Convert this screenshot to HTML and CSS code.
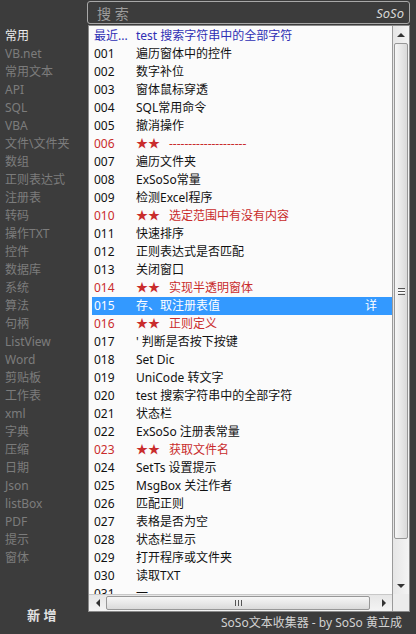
FILE: index.html
```html
<!DOCTYPE html>
<html lang="zh-CN">
<head>
    <meta charset="UTF-8">
    <title>SoSo文本收集器</title>
    <link rel="stylesheet" href="styles.css">
</head>
<body>
    <div class="app">
        <div class="side">
            <ul class="cats">
                <li class="on">常用</li>
                <li>VB.net</li>
                <li>常用文本</li>
                <li>API</li>
                <li>SQL</li>
                <li>VBA</li>
                <li>文件\文件夹</li>
                <li>数组</li>
                <li>正则表达式</li>
                <li>注册表</li>
                <li>转码</li>
                <li>操作TXT</li>
                <li>控件</li>
                <li>数据库</li>
                <li>系统</li>
                <li>算法</li>
                <li>句柄</li>
                <li>ListView</li>
                <li>Word</li>
                <li>剪贴板</li>
                <li>工作表</li>
                <li>xml</li>
                <li>字典</li>
                <li>压缩</li>
                <li>日期</li>
                <li>Json</li>
                <li>listBox</li>
                <li>PDF</li>
                <li>提示</li>
                <li>窗体</li>
            </ul>
            <div class="add">新 增</div>
        </div>

        <div class="main">
            <div class="search">
                <span class="search-label">搜 索</span>
                <span class="brand">SoSo</span>
            </div>

            <div class="list">
                <div class="rows">
                    <div class="row recent"><span class="no">最近...</span><span>test 搜索字符串中的全部字符</span></div>
                    <div class="row"><span class="no">001</span><span>遍历窗体中的控件</span></div>
                    <div class="row"><span class="no">002</span><span>数字补位</span></div>
                    <div class="row"><span class="no">003</span><span>窗体鼠标穿透</span></div>
                    <div class="row"><span class="no">004</span><span>SQL常用命令</span></div>
                    <div class="row"><span class="no">005</span><span>撤消操作</span></div>
                    <div class="row red"><span class="no">006</span><span class="star">★★</span><span>--------------------</span></div>
                    <div class="row"><span class="no">007</span><span>遍历文件夹</span></div>
                    <div class="row"><span class="no">008</span><span>ExSoSo常量</span></div>
                    <div class="row"><span class="no">009</span><span>检测Excel程序</span></div>
                    <div class="row red"><span class="no">010</span><span class="star">★★</span><span>选定范围中有没有内容</span></div>
                    <div class="row"><span class="no">011</span><span>快速排序</span></div>
                    <div class="row"><span class="no">012</span><span>正则表达式是否匹配</span></div>
                    <div class="row"><span class="no">013</span><span>关闭窗口</span></div>
                    <div class="row red"><span class="no">014</span><span class="star">★★</span><span>实现半透明窗体</span></div>
                    <div class="row selected"><span class="no">015</span><span>存、取注册表值</span><span class="detail">详</span></div>
                    <div class="row red"><span class="no">016</span><span class="star">★★</span><span>正则定义</span></div>
                    <div class="row"><span class="no">017</span><span>' 判断是否按下按键</span></div>
                    <div class="row"><span class="no">018</span><span>Set Dic</span></div>
                    <div class="row"><span class="no">019</span><span>UniCode 转文字</span></div>
                    <div class="row"><span class="no">020</span><span>test 搜索字符串中的全部字符</span></div>
                    <div class="row"><span class="no">021</span><span>状态栏</span></div>
                    <div class="row"><span class="no">022</span><span>ExSoSo 注册表常量</span></div>
                    <div class="row red"><span class="no">023</span><span class="star">★★</span><span>获取文件名</span></div>
                    <div class="row"><span class="no">024</span><span>SetTs 设置提示</span></div>
                    <div class="row"><span class="no">025</span><span>MsgBox 关注作者</span></div>
                    <div class="row"><span class="no">026</span><span>匹配正则</span></div>
                    <div class="row"><span class="no">027</span><span>表格是否为空</span></div>
                    <div class="row"><span class="no">028</span><span>状态栏显示</span></div>
                    <div class="row"><span class="no">029</span><span>打开程序或文件夹</span></div>
                    <div class="row"><span class="no">030</span><span>读取TXT</span></div>
                    <div class="row"><span class="no">031</span><span>一</span></div>
                </div>

                <!-- vertical scrollbar -->
                <div class="vbar">
                    <div class="sbtn"><span class="arrow up"></span></div>
                    <div class="vthumb"><span class="grip"></span></div>
                    <div class="vtrack"></div>
                    <div class="sbtn"><span class="arrow down"></span></div>
                </div>

                <!-- horizontal scrollbar -->
                <div class="hbar">
                    <div class="sbtn h"><span class="arrow left"></span></div>
                    <div class="hthumb"><span class="grip"></span></div>
                    <div class="htrack"></div>
                    <div class="sbtn h"><span class="arrow right"></span></div>
                </div>
                <div class="corner"></div>
            </div>

            <div class="status">SoSo文本收集器 - by SoSo 黄立成</div>
        </div>
    </div>
</body>
</html>
```

FILE: styles.css
```css
body {
    margin: 0;
    background-color: #3c3c3c;
    font-family: "Noto Sans", "Noto Sans CJK SC", sans-serif;
    font-size: 12px;
}

.app {
    display: flex;
    width: 416px;
    height: 634px;
}

/* left category column */
.side {
    width: 87px;
    display: flex;
    flex-direction: column;
}

.cats {
    list-style: none;
    margin: 0;
    padding: 27px 0 0 5px;
}

.cats li {
    height: 18px;
    line-height: 18px;
    color: #7c7c7c;
    white-space: nowrap;
}

.cats li.on {
    color: #ececec;
}

.add {
    margin-top: auto;
    padding: 0 0 10px 27px;
    color: #e2e2e2;
    font-weight: bold;
    font-size: 13px;
    line-height: 18px;
}

/* right column */
.main {
    width: 323px;
    display: flex;
    flex-direction: column;
}

.search {
    height: 21px;
    margin-top: 1px;
    border: 1px solid #a8a8a8;
    border-radius: 3px;
    display: flex;
    align-items: center;
    justify-content: space-between;
    padding: 0 5px 0 9px;
}

.search-label {
    color: #9c9c9c;
    font-size: 14px;
}

.brand {
    color: #d6d6d6;
    font-style: italic;
    font-size: 13px;
}

.list {
    margin-top: 1px;
    margin-left: 1px;
    height: 585px;
    border: 1px solid #8a8a8a;
    background-color: #fbfbfb;
    display: grid;
    grid-template-columns: 1fr 17px;
    grid-template-rows: 1fr 17px;
    overflow: hidden;
}

.rows {
    padding: 1px 0 0 3px;
    overflow: hidden;
}

.row {
    display: flex;
    height: 18px;
    line-height: 18px;
    color: #111;
    white-space: nowrap;
}

.row .no {
    width: 42px;
    padding-left: 2px;
    flex-shrink: 0;
}

.row .star {
    width: 33px;
    flex-shrink: 0;
}

.recent {
    color: #2f2fb4;
}

.red {
    color: #c92c2c;
}

.selected {
    background-color: #3399ff;
    color: #fff;
}

.detail {
    margin-left: auto;
    padding-right: 15px;
}

/* scrollbars */
.vbar {
    display: flex;
    flex-direction: column;
    border-left: 1px solid #9a9a9a;
    background: linear-gradient(to right, #e6e6e6, #f4f4f4);
}

.sbtn {
    height: 17px;
    flex-shrink: 0;
    display: flex;
    align-items: center;
    justify-content: center;
}

.sbtn.h {
    width: 17px;
    height: auto;
}

.arrow {
    width: 0;
    height: 0;
    border: 4px solid transparent;
}

.arrow.up {
    border-bottom-color: #333;
    border-top-width: 0;
}

.arrow.down {
    border-top-color: #333;
    border-bottom-width: 0;
}

.arrow.left {
    border-right-color: #333;
    border-left-width: 0;
}

.arrow.right {
    border-left-color: #333;
    border-right-width: 0;
}

.vthumb {
    height: 494px;
    margin: 0 1px;
    border: 1px solid #979797;
    border-radius: 2px;
    background: linear-gradient(to right, #f6f6f6, #dadada);
    display: flex;
    align-items: center;
    justify-content: center;
}

.vthumb .grip {
    width: 7px;
    height: 5px;
    border-top: 1px solid #555;
    border-bottom: 1px solid #555;
    background: linear-gradient(#fff 0, #fff 1px, #555 1px, #555 2px, #fff 2px);
    background-size: 100% 3px;
    background-position: 0 1px;
    background-repeat: no-repeat;
}

.vtrack,
.htrack {
    flex: 1;
}

.hbar {
    display: flex;
    border-top: 1px solid #c8c8c8;
    background: linear-gradient(#e6e6e6, #f4f4f4);
}

.hthumb {
    width: 262px;
    margin: 1px 0;
    border: 1px solid #979797;
    border-radius: 2px;
    background: linear-gradient(#f6f6f6, #dadada);
    display: flex;
    align-items: center;
    justify-content: center;
}

.hthumb .grip {
    width: 5px;
    height: 6px;
    border-left: 1px solid #555;
    border-right: 1px solid #555;
    background: linear-gradient(to right, #555, #555) center / 1px 100% no-repeat;
}

.corner {
    border-left: 1px solid #9a9a9a;
    background-color: #ececec;
}

.status {
    text-align: right;
    padding-right: 8px;
    margin-top: 2px;
    color: #d2d2d2;
    font-size: 12px;
    line-height: 18px;
}
```
